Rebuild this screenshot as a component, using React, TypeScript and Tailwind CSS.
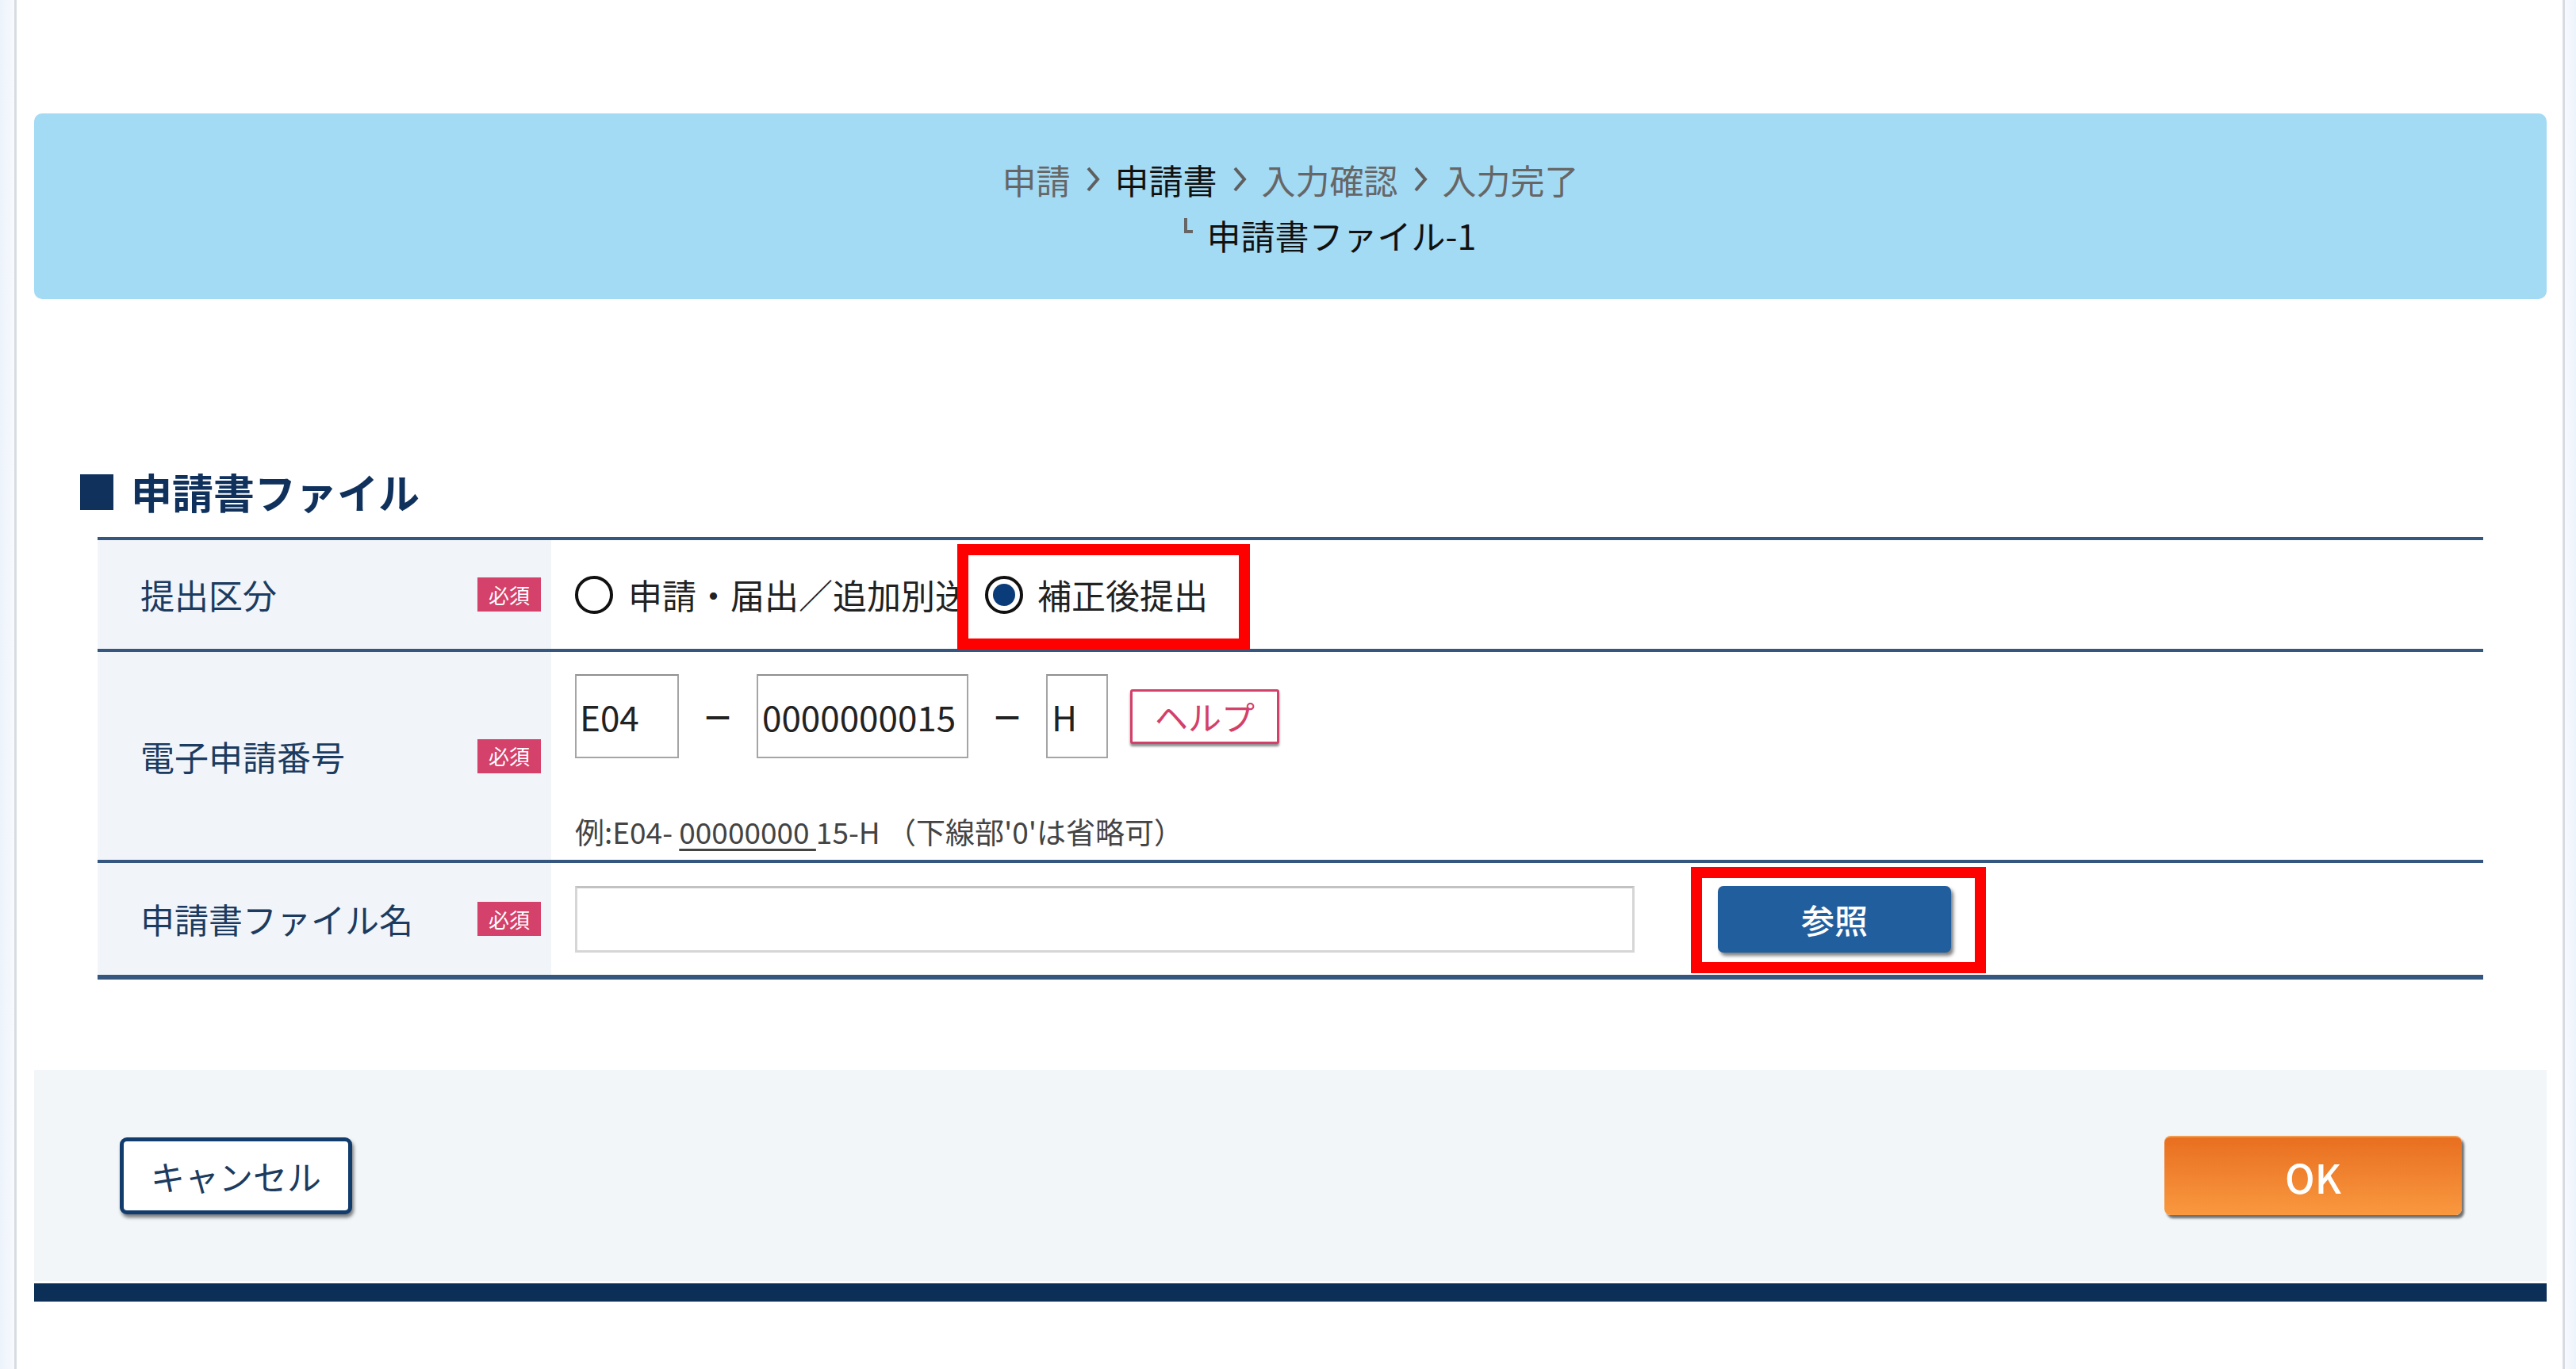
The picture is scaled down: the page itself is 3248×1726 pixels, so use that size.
import React from "react";

const JP = "font-['Noto_Sans_CJK_JP','Noto_Sans','Liberation_Sans',sans-serif]";

function Chevron() {
  return (
    <svg width="20" height="34" viewBox="0 0 20 34" className="shrink-0">
      <polyline points="4,3 16,17 4,31" fill="none" stroke="#5f5f5f" strokeWidth="4" strokeLinejoin="miter" />
    </svg>
  );
}

function Badge() {
  return (
    <span className="w-[80px] h-[43px] bg-[#d4416a] text-white text-[26px] leading-none flex items-center justify-center">
      必須
    </span>
  );
}

function Radio({ checked }: { checked?: boolean }) {
  return (
    <span className="w-[48px] h-[48px] rounded-full border-[4px] border-[#111] bg-white flex items-center justify-center shrink-0">
      {checked && <span className="w-[28px] h-[28px] rounded-full bg-[#0b3c7a]" />}
    </span>
  );
}

function Label({ text }: { text: string }) {
  return (
    <div className="w-[572px] shrink-0 bg-[#f1f5f9] flex items-center justify-between pl-[54px] pr-[13px]">
      <span className="text-[43px] text-[#1c3b60]">{text}</span>
      <Badge />
    </div>
  );
}

export default function App() {
  return (
    <div className={`${JP} w-[3248px] h-[1726px] flex bg-white overflow-hidden`}>
      {/* outer strips */}
      <div className="w-[18px] shrink-0 bg-gradient-to-r from-[#edf3fb] to-[#f7fafe]" />
      <div className="flex-1 border-l-[3px] border-r-[3px] border-[#d8dce2] pl-[22px] pr-[20px] pt-[143px]">
        {/* breadcrumb banner */}
        <div className="h-[234px] rounded-[10px] bg-[#a3daf4] flex flex-col items-center justify-center pt-[2px]">
          <div className="flex items-center gap-[18px] text-[43px] leading-[70px] text-[#666]">
            <span>申請</span>
            <Chevron />
            <span className="text-[#111]">申請書</span>
            <Chevron />
            <span>入力確認</span>
            <Chevron />
            <span>入力完了</span>
          </div>
          <div className="flex items-start gap-[18px] text-[43px] leading-[70px] text-[#111] pl-[100px]">
            <span className="mt-[14px] w-[11px] h-[19px] border-l-[4px] border-b-[4px] border-[#666]" />
            <span>申請書ファイル-1</span>
          </div>
        </div>

        {/* section heading */}
        <div className="mt-[213px] ml-[58px] flex items-center gap-[22px] h-[60px]">
          <span className="w-[42px] h-[45px] bg-[#0f315c]" />
          <h2 className="text-[52px] font-bold leading-[60px] text-[#0f315c]">申請書ファイル</h2>
        </div>

        {/* form table */}
        <div className="mt-[27px] mx-[80px] border-t-[4px] border-[#34567f]">
          {/* row 1 */}
          <div className="flex h-[141px] border-b-[4px] border-[#34567f]">
            <Label text="提出区分" />
            <div className="relative flex-1 flex items-center pl-[30px] text-[43px] text-[#222]">
              <Radio />
              <span className="ml-[19px] whitespace-nowrap">申請・届出／追加別送</span>
              <span className="ml-[20px] flex items-center">
                <Radio checked />
                <span className="ml-[18px] whitespace-nowrap">補正後提出</span>
              </span>
              <div className="absolute left-[512px] top-[5px] w-[369px] h-[133px] border-[14px] border-[#ff0000]" />
            </div>
          </div>

          {/* row 2 */}
          <div className="flex h-[266px] border-b-[4px] border-[#34567f]">
            <Label text="電子申請番号" />
            <div className="flex-1 flex flex-col pl-[30px] pt-[28px]">
              <div className="flex items-center h-[106px] text-[44px] text-[#222]">
                <div className="w-[131px] h-[106px] border-[2px] border-[#a5a5a5] border-t-[#8f8f8f] flex items-center pl-[4px]">E04</div>
                <span className="w-[98px] text-center text-[40px] font-bold">－</span>
                <div className="w-[267px] h-[106px] border-[2px] border-[#a5a5a5] border-t-[#8f8f8f] flex items-center pl-[5px]">0000000015</div>
                <span className="w-[98px] text-center text-[40px] font-bold">－</span>
                <div className="w-[78px] h-[106px] border-[2px] border-[#a5a5a5] border-t-[#8f8f8f] flex items-center pl-[5px]">H</div>
                <button className="ml-[28px] w-[188px] h-[69px] border-[3px] border-[#d3406a] rounded-[3px] bg-white text-[#d3406a] text-[42px] leading-none shadow-[0_3px_3px_rgba(0,0,0,0.45)]">
                  ヘルプ
                </button>
              </div>
              <p className="mt-[66px] text-[37px] leading-[52px] text-[#444] whitespace-nowrap">
                例:E04- <span className="underline underline-offset-[6px] decoration-[3px]">00000000 </span>15-H （下線部'0'は省略可）
              </p>
            </div>
          </div>

          {/* row 3 */}
          <div className="flex h-[147px] border-b-[6px] border-[#34567f]">
            <Label text="申請書ファイル名" />
            <div className="relative flex-1 flex items-center pl-[30px]">
              <div className="w-[1336px] h-[84px] border-[3px] border-[#d6d6d6] border-t-[#c2c2c2] bg-white" />
              <button className="ml-[105px] w-[294px] h-[84px] rounded-[7px] bg-[#215e9e] text-white text-[42px] font-medium shadow-[3px_4px_4px_rgba(0,0,0,0.5)]">
                参照
              </button>
              <div className="absolute left-[1437px] top-[5px] w-[372px] h-[134px] border-[14px] border-[#ff0000]" />
            </div>
          </div>
        </div>

        {/* footer */}
        <div className="mt-[114px] h-[266px] bg-[#f2f6f9] flex items-center justify-between pl-[108px] pr-[107px]">
          <button className="w-[293px] h-[97px] rounded-[9px] border-[5px] border-[#113c6c] bg-white text-[43px] text-[#1c3b60] shadow-[2px_4px_4px_rgba(0,0,0,0.5)]">
            キャンセル
          </button>
          <button className="w-[375px] h-[100px] rounded-[8px] bg-gradient-to-b from-[#e86f1f] to-[#f9983f] border-t-[2px] border-[#f29a4e] text-white text-[50px] font-medium shadow-[3px_4px_3px_rgba(0,0,0,0.55)]">
            OK
          </button>
        </div>
        <div className="mt-[3px] h-[23px] bg-[#0c2f57]" />
      </div>
      <div className="w-[14px] shrink-0 bg-gradient-to-r from-[#f7fafe] to-[#edf3fb]" />
    </div>
  );
}
